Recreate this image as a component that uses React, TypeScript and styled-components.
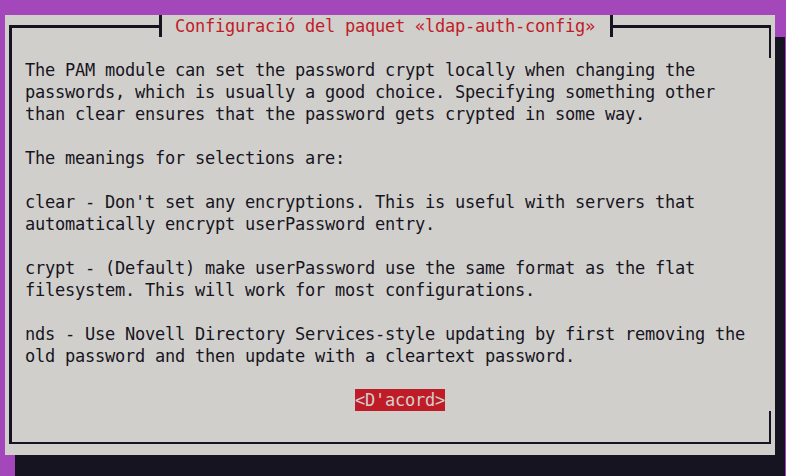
import React from "react";
import styled, { createGlobalStyle } from "styled-components";

const INK = "#171421";
const PAPER = "#d0cfcc";
const RED = "#c01c28";
const MAGENTA = "#a347ba";

const GlobalStyle = createGlobalStyle`
  html, body {
    margin: 0;
    padding: 0;
    background: ${MAGENTA};
    overflow: hidden;
  }
  body {
    font-family: "DejaVu Sans Mono", "Liberation Mono", monospace;
  }
`;

const Screen = styled.div`
  box-sizing: border-box;
  width: 786px;
  height: 476px;
  padding: 15px 0 0 5px;
`;

const Dialog = styled.div`
  box-sizing: border-box;
  width: 770px;
  height: 440px;
  padding: 10px 0 0 4px;
  background: ${PAPER};
  box-shadow: 10px 22px 0 0 ${INK};
`;

const Frame = styled.div`
  position: relative;
  box-sizing: border-box;
  width: 762px;
  height: 419px;
  border-left: 3px solid ${INK};
  border-top: 3px solid ${INK};
  border-bottom: 2px solid ${INK};

  &::before,
  &::after {
    content: "";
    position: absolute;
    right: 0;
    width: 2px;
    background: ${INK};
  }
  &::before {
    top: -3px;
    height: 33px;
  }
  &::after {
    bottom: 0;
    height: 31px;
  }
`;

const Title = styled.div`
  position: absolute;
  left: 147px;
  top: -13px;
  box-sizing: border-box;
  width: 454px;
  height: 22px;
  padding: 0 15px 0 13px;
  border-left: 3px solid ${INK};
  border-right: 3px solid ${INK};
  background: ${PAPER};
  color: ${RED};
  font-size: 17px;
  letter-spacing: -0.234px;
  line-height: 22px;
  white-space: pre;
`;

const Body = styled.div`
  padding: 31px 0 0 13px;
  color: ${INK};
  font-size: 17px;
  letter-spacing: -0.234px;
  line-height: 22px;
`;

const Paragraph = styled.p`
  margin: 0 0 22px;
  white-space: pre;
`;

const ButtonRow = styled.div`
  display: flex;
  padding-left: 330px;
`;

const Button = styled.span`
  display: inline-block;
  background: ${RED};
  color: ${PAPER};
  white-space: pre;
`;

const paragraphs = [
  [
    "The PAM module can set the password crypt locally when changing the",
    "passwords, which is usually a good choice. Specifying something other",
    "than clear ensures that the password gets crypted in some way.",
  ],
  ["The meanings for selections are:"],
  [
    "clear - Don't set any encryptions. This is useful with servers that",
    "automatically encrypt userPassword entry.",
  ],
  [
    "crypt - (Default) make userPassword use the same format as the flat",
    "filesystem. This will work for most configurations.",
  ],
  [
    "nds - Use Novell Directory Services-style updating by first removing the",
    "old password and then update with a cleartext password.",
  ],
];

export default function App() {
  return (
    <>
      <GlobalStyle />
      <Screen>
        <Dialog>
          <Frame>
            <Title>Configuració del paquet «ldap-auth-config»</Title>
            <Body>
              {paragraphs.map((lines, i) => (
                <Paragraph key={i}>{lines.join("\n")}</Paragraph>
              ))}
              <ButtonRow>
                <Button>{"<D'acord>"}</Button>
              </ButtonRow>
            </Body>
          </Frame>
        </Dialog>
      </Screen>
    </>
  );
}
